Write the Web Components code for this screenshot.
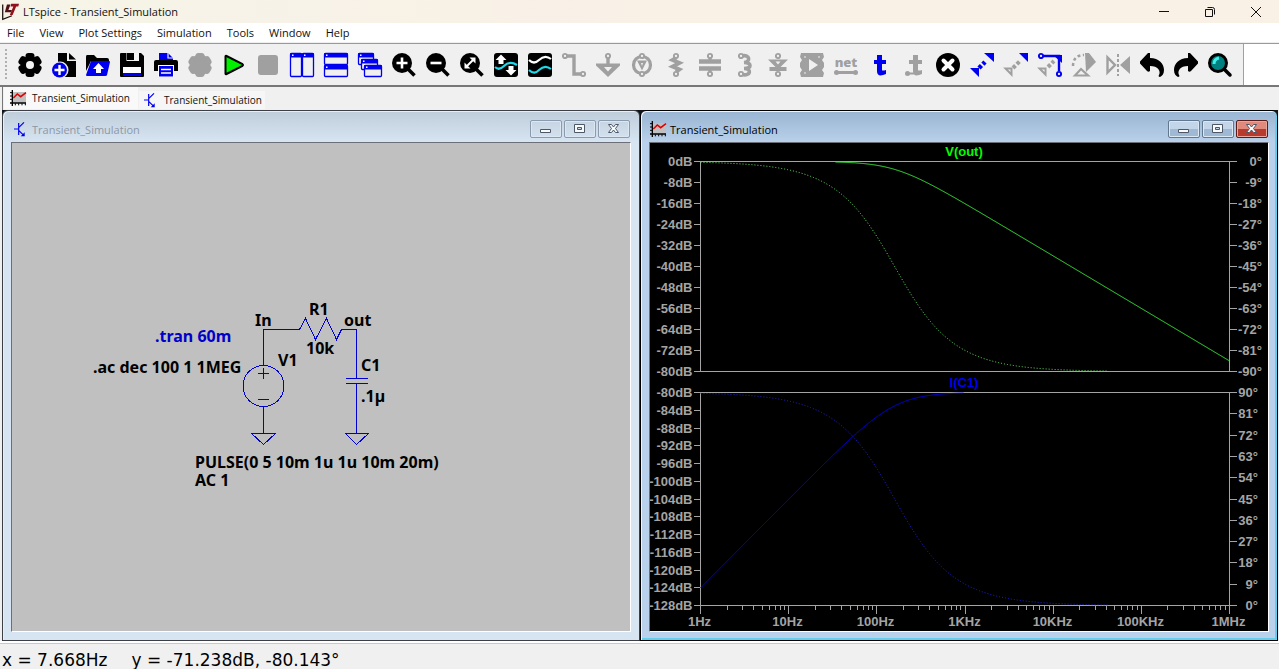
<!DOCTYPE html>
<html lang="en">
<head>
<meta charset="utf-8">
<title>LTspice - Transient_Simulation</title>
<style>
  html, body { margin: 0; height: 100%; }
  body { font: 11px/16px "Open Sans", "Noto Sans", sans-serif; color: #111; background: #f0f0f0; overflow: hidden; }
</style>
</head>
<body>
<lt-app></lt-app>

<script>
const RESET = `*{box-sizing:border-box} button{font:inherit;color:inherit;background:none;border:0;padding:0;margin:0} svg{display:block}`;

function define(name, html, Base = class extends HTMLElement {}) {
  const template = document.createElement('template');
  template.innerHTML = html;
  customElements.define(name, class extends Base {
    constructor() {
      super();
      this.attachShadow({ mode: 'open' }).append(template.content.cloneNode(true));
    }
  });
}

/* ---------- icons ---------- */
const G = '#a0a0a0', B = '#0000f0';
const cog = (c, r = 9) => `<g fill="${c}"><circle cx="12" cy="12" r="${r}"/><rect x="7.500" y="0" width="9" height="24" rx="3"/><rect x="7.500" y="0" width="9" height="24" rx="3" transform="rotate(60 12 12)"/><rect x="7.500" y="0" width="9" height="24" rx="3" transform="rotate(120 12 12)"/></g>`;
const glass = inner => `<circle cx="10" cy="10" r="10"/><path d="M15 15l7.500 7.500" stroke="#000" stroke-width="3.500"/>${inner}`;
const win = (x, y, w, h) => `<rect x="${x + .5}" y="${y + .5}" width="${w - 1}" height="${h - 1}" rx="1" fill="#f0f0f0" stroke="${B}" stroke-width="1.300"/><rect x="${x}" y="${y}" width="${w}" height="4.500" rx="1" fill="${B}"/><rect x="${x + 2}" y="${y + 1.5}" width="1.500" height="1.500" fill="#fff"/>`;
const pin = (x, y, c = G) => `<circle cx="${x}" cy="${y}" r="2.100" fill="#f0f0f0" stroke="${c}" stroke-width="1.900"/>`;
const undo = `<path d="M10 0v5c9 0 14 6 14 12 0 4-2 6-4 7-1 0-2-1-1-2 2-4-1-9-9-9v5c-1 1-2 1-3 0L0 10.500V8.500L8 0z"/>`;
const ICONS = {
  cog: cog('#000') + '<circle cx="12" cy="12" r="4" fill="#f4f4f4"/>',
  newdoc: `<path d="M6 0h9v8h9v16H6z"/><path d="M17 0l7 6.500h-7z"/><circle cx="8" cy="17" r="8.500" fill="#f0f0f0"/><circle cx="7.500" cy="17" r="7.500" fill="${B}"/><path d="M7.500 12v10M2.500 17h10" stroke="#fff" stroke-width="2.400"/>`,
  open: `<path d="M1 2h7l3 3h10q2 0 2 2v1H5L0 18V4q0-2 1-2z"/><path d="M5 8h18q1 0 1 1l-3 13q0 1-2 1H1q-1 0-1-1z" fill="${B}"/><path d="M12.500 10l5.500 6h-3v4h-5v-4H7z" fill="#fff"/>`,
  save: `<path d="M0 1q0-1 1-1h20l3 3v20q0 1-1 1H1q-1 0-1-1z"/><path d="M5 0h1.500v8H19V0h-5v6h-3V0z" fill="#f4f4f4"/><path d="M7 0h7v7H7z"/><path d="M3 14h18v6H3z" fill="#fff"/><path d="M3 20h18v3H3z" fill="${B}"/>`,
  print: `<path d="M5 0h9l5 5v3H5z" fill="${B}"/><path d="M14 0v5h5" fill="none" stroke="#f0f0f0" stroke-width="1.200"/><path d="M2 7h20q2 0 2 2v9h-4v-4H4v4H0V9q0-2 2-2z"/><path d="M4 12h16v12H4z" fill="#fff"/><path d="M5 13h14v10.500H5z" fill="${B}"/><path d="M7 16.500h10M7 20h10" stroke="#fff" stroke-width="1.400"/>`,
  cogoff: cog(G, 10.5),
  run: `<path d="M3.500 3.500q0-1 1-.5l16 8.200q1 .8 0 1.600l-16 8.200q-1 .5-1-.5z" fill="#00f000" stroke="#000" stroke-width="2"/>`,
  stop: `<rect x="2" y="2" width="20" height="20" rx="3" fill="${G}"/>`,
  tilev: win(0, 0, 12, 24) + win(12, 0, 12, 24),
  tileh: win(0, 0, 24, 12) + win(0, 12, 24, 12),
  cascade: win(0, 0, 16, 12) + win(3, 6, 17, 11) + win(6, 12, 18, 12),
  zoomin: glass('<path d="M10 4.500v11M4.500 10h11" stroke="#fff" stroke-width="2.600"/>'),
  zoomout: glass('<path d="M4.500 10h11" stroke="#fff" stroke-width="2.600"/>'),
  zoomfit: glass('<path d="M7 13l6-6" stroke="#fff" stroke-width="2"/><path d="M9.500 4.500h6v6zM4.500 9.500v6h6z" fill="#fff"/>'),
  autorange: `<rect width="24" height="24" rx="3"/><path d="M1 14c3 3 6 2 9-1s7-5 13-1" fill="none" stroke="#1fd8e8" stroke-width="2.200"/><path d="M7 1.500l5.500 5.500H9.500v4h-5V7H1.500zM17 22.500l-5.500-5.500h3v-4h5v4h3z" fill="#fff"/>`,
  traces: `<rect width="24" height="24" rx="3"/><path d="M1 7c4 4 7 3 10 0s7-5 12-1" fill="none" stroke="#fff" stroke-width="2.200"/><path d="M1 17c4 4 7 3 10 0s7-5 12-1" fill="none" stroke="#1fd8e8" stroke-width="2.200"/>`,
  wire: `<path d="M3 3h9v18h9" fill="none" stroke="${G}" stroke-width="3.400"/>${pin(3, 3)}${pin(21, 21)}`,
  gnd: `<path d="M12 4v8" stroke="${G}" stroke-width="3.400"/><path d="M0 10.500h24v2L12 24 0 12.500z" fill="${G}"/><path d="M8 14h8l-4 4.500z" fill="#f0f0f0"/>${pin(12, 3)}`,
  source: `<circle cx="12" cy="12" r="8.500" fill="none" stroke="${G}" stroke-width="3.200"/><path d="M7 7.500h10L12 17.500z" fill="${G}"/><path d="M11 10h2l-1 3z" fill="#eee"/>${pin(12, 3)}${pin(12, 21)}`,
  res: `<path d="M12 5l-3.500 2 7 3-7 3.500 7 3-3.500 2.500" fill="none" stroke="${G}" stroke-width="3.800"/>${pin(12, 3)}${pin(12, 21)}`,
  cap: `<path d="M1 8.500h22M1 15.500h22" stroke="${G}" stroke-width="4.500"/><path d="M12 4v4M12 16v4" stroke="${G}" stroke-width="3"/>${pin(12, 3)}${pin(12, 21)}`,
  ind: `<path d="M10 3c8-2 9 6 2 6.500 8 0 8 6 0 6 8 0 7 8-2 6" fill="none" stroke="${G}" stroke-width="3.600"/>${pin(9, 3)}${pin(9, 21)}`,
  diode: `<path d="M2 6.500h20l-7.500 7.500h6v4h-17v-4h6z" fill="${G}"/><path d="M9.500 8.500h5L12 11.500z" fill="#f0f0f0"/>${pin(12, 3)}${pin(12, 21)}`,
  comp: `<path d="M1 0h22l1 4-2 3 2 3v4l-2 3 2 3-1 4H1l-1-4 2-3-2-3v-4l2-3-2-3z" fill="${G}"/><path d="M9 6l9 6-9 6z" fill="#f0f0f0"/><path d="M4 4h2M4 20h2M18 4h2" stroke="#eee"/>`,
  net: `<path d="M3 19.500h18" stroke="${G}" stroke-width="3"/><circle cx="2.500" cy="19.500" r="2.500" fill="${G}"/><circle cx="21.500" cy="19.500" r="2.500" fill="${G}"/><text x="12" y="14" text-anchor="middle" font-family="Open Sans" font-weight="800" font-size="13" fill="${G}">net</text>`,
  textt: `<path d="M9 2h5v5h4v4h-4v6q0 1 4 0v4q-9 4-9-3v-7H6V7h3z" fill="${B}"/>`,
  dott: `<path d="M11 2h5v5h4v4h-4v6q0 1 4 0v4q-9 4-9-3v-7H7V7h4z" fill="${G}"/><path d="M6 20.500h6" stroke="${G}" stroke-width="2"/><circle cx="5.500" cy="20.500" r="2.500" fill="${G}"/>`,
  del: `<circle cx="12" cy="12" r="12"/><path d="M7.500 7.500l9 9M16.500 7.500l-9 9" stroke="#fff" stroke-width="4" stroke-linecap="round"/>`,
  move: `<path d="M14 0h10v9zM0 15h9v9z" fill="${B}"/><path d="M9 15l6-6" stroke="${B}" stroke-width="4.500" stroke-dasharray="3.500 2"/>`,
  copy: `<path d="M15 0h9v9z" fill="${B}"/><path d="M1.500 15.500h6v6z" fill="none" stroke="${G}" stroke-width="2"/><path d="M9 15l7-7" stroke="${G}" stroke-width="4" stroke-dasharray="3.500 2"/>`,
  drag: `<path d="M4 3h17v15" fill="none" stroke="${B}" stroke-width="2.400"/><path d="M15 2h9v8z" fill="${B}"/>${pin(3, 3, B)}${pin(21, 21, B)}<path d="M1.500 15.500h6v6z" fill="none" stroke="${G}" stroke-width="2"/><path d="M10 14l6-6" stroke="${G}" stroke-width="4" stroke-dasharray="3.500 2"/>`,
  rotate: `<path d="M13 0h4l7 9-10 10z" fill="${G}"/><path d="M1 13C1 6 5 2 12 2" fill="none" stroke="${G}" stroke-width="2.500" stroke-dasharray="3 2.500"/><path d="M3 22.500L9 16l7 6.500z" fill="none" stroke="${G}" stroke-width="2.200"/>`,
  mirror: `<path d="M12 1v22" stroke="${G}" stroke-width="2" stroke-dasharray="3 2"/><path d="M1.500 4.500v15L9 12z" fill="none" stroke="${G}" stroke-width="2.400"/><path d="M24 3v18l-10-9z" fill="${G}"/>`,
  undo,
  redo: `<g transform="matrix(-1 0 0 1 24 0)">${undo}</g>`,
  find: `<path d="M15 15l7 7" stroke="#000" stroke-width="3.500" stroke-linecap="round"/><circle cx="10" cy="10" r="8.500" fill="#008080" stroke="#000" stroke-width="3"/><path d="M6 11q0-5 5-6" stroke="#3cf0e8" stroke-width="3" fill="none"/>`,
  plot: `<path d="M4 3h20v16H4z" fill="#c0c0c0"/><path d="M3.500 0v24M0 19.500h24" stroke="#000" stroke-width="2"/><path d="M0 4h3M0 9h3M0 14h3M8 20v3M13 20v3M18 20v3M23 20v3" stroke="#000" stroke-width="1.500"/><path d="M5 12l6-6 5 4 8-6" fill="none" stroke="#e00000" stroke-width="2.300"/>`,
  schem: `<path d="M10 3v18M3 12h7M10 10l8-8M10 14l8 8" fill="none" stroke="${B}" stroke-width="1.800"/><path d="M19 23v-6l-6 6z" fill="${B}"/>`,
  logo: `<path d="M1 2L23 1 16 17 2 23z" fill="#f6efe4"/><path d="M1 2v21l13-5" fill="none" stroke="#1a1010" stroke-width="1.800"/><path d="M7 2h5l-3 8h5l-1 3H4z" fill="#501018"/><path d="M13 1h11l-1 4h-3l-5 12h-4l5-12h-4z" fill="#90101c"/>`
};
customElements.define('lt-icon', class extends HTMLElement {
  constructor() { super(); this.attachShadow({ mode: 'open' }); }
  connectedCallback() {
    this.shadowRoot.innerHTML = `<style>:host{display:block;width:24px;height:24px}svg{display:block;width:100%;height:100%;overflow:visible}</style><svg viewBox="0 0 24 24" aria-hidden="true">${ICONS[this.getAttribute('name')]}</svg>`;
  }
});

/* ---------- title bar ---------- */
define('lt-titlebar', `<style>${RESET}
  :host{display:flex;align-items:center;height:23px;padding-left:2px;background:linear-gradient(90deg,#f6f4e8,#f9f0e6 50%,#f9f0e6)}
  lt-icon{width:17px;height:17px;margin-right:4px}
  h1{font:inherit;margin:0;flex:1}
  button{width:46px;height:23px;display:grid;place-items:center}
  path{fill:none;stroke:#111}
</style>
<lt-icon name="logo"></lt-icon><h1><slot></slot></h1>
<button aria-label="Minimize"><svg width="12" height="12"><path d="M1 5.500h10"/></svg></button>
<button aria-label="Restore"><svg width="12" height="12"><path d="M1.500 3.500h7v7h-7zM3.500 1.500h5q2 0 2 2v5"/></svg></button>
<button aria-label="Close"><svg width="12" height="12"><path d="M1 1l10 10M11 1L1 11"/></svg></button>`);

/* ---------- menu ---------- */
define('lt-menubar', `<style>${RESET}
  :host{display:flex;height:20px;background:#fff;border-bottom:1px solid #eee}
  button{padding:0 8px 0 7px}
</style>
<button>File</button><button>View</button><button>Plot Settings</button><button>Simulation</button><button>Tools</button><button>Window</button><button>Help</button>`);

/* ---------- toolbar ---------- */
const TOOLS = [['cog','Settings'],['newdoc','New schematic'],['open','Open'],['save','Save'],['print','Print'],['cogoff','Configure analysis'],['run','Run'],['stop','Stop'],['tilev','Tile vertically'],['tileh','Tile horizontally'],['cascade','Cascade'],['zoomin','Zoom in'],['zoomout','Zoom out'],['zoomfit','Zoom to fit'],['autorange','Autorange'],['traces','Pick traces'],['wire','Wire'],['gnd','Ground'],['source','Voltage source'],['res','Resistor'],['cap','Capacitor'],['ind','Inductor'],['diode','Diode'],['comp','Component'],['net','Net label'],['textt','Text'],['dott','SPICE directive'],['del','Delete'],['move','Move'],['copy','Duplicate'],['drag','Drag'],['rotate','Rotate'],['mirror','Mirror'],['undo','Undo'],['redo','Redo'],['find','Find']];
define('lt-toolbar', `<style>${RESET}
  :host{display:flex;background:#fff;height:44px;border-top:1px solid #9a9a9a;border-bottom:2px solid #777}
  .band{display:flex;align-items:center;background:#f0f0f0;border-right:1px solid #a0a0a0;padding:1px 6px 0 5px}
  .grip{width:2px;height:32px;margin-right:6px;background:repeating-linear-gradient(#b0b0b0 0 2px,transparent 2px 4px)}
  button{width:34px;height:36px;display:grid;place-items:center}
</style>
<div class="band" role="toolbar"><span class="grip"></span>${TOOLS.map(([n, l]) => `<button aria-label="${l}"><lt-icon name="${n}"></lt-icon></button>`).join('')}</div>`);

/* ---------- document tabs ---------- */
define('lt-tabs', `<style>${RESET}
  :host{display:flex;align-items:flex-end;gap:1px;height:23px;margin-left:2px;padding:0 0 1px 1px;background:#f0f0f0;border-left:1px solid #777;font-size:10px}
  button{display:flex;align-items:center;gap:6px;height:18px;padding:0 3px;background:#f6f6f6}
  button.on{height:22px;padding:0 8px 0 6px;background:#f9f9f9}
  lt-icon{width:16px;height:16px}
</style>
<button class="on"><lt-icon name="plot"></lt-icon>Transient_Simulation</button>
<button><lt-icon name="schem"></lt-icon>Transient_Simulation</button>`);

/* ---------- child window ---------- */
define('lt-window', `<style>${RESET}
  :host{display:flex;flex-direction:column;min-width:0;min-height:0;border:1px solid #3c3f46;border-radius:6px 6px 0 0;padding:0 8px 8px;
    background:linear-gradient(#bfcddb,#d7e4f2 31px);color:#8c98a6;box-shadow:inset 1px 1px #e6eef6;overflow:hidden}
  :host([active]){background:linear-gradient(#99b4d1,#b9d1ea 31px);color:#000;border-color:#000;box-shadow:inset 1px 1px #eef6fc,inset -2px -2px #62cfee}
  header{display:flex;align-items:center;height:31px;gap:2px;padding:4px 1px 0 0}
  ::slotted(lt-icon){width:16px;height:16px;margin:0 2px 0 1px}
  h2{font:inherit;margin:0;padding-top:2px;flex:1}
  button{width:32px;height:18px;border:1px solid #8a9bb0;border-radius:2px;display:grid;place-items:center;box-shadow:inset 0 0 0 1px #dbe7f3}
  :host([active]) button{border-color:#61788f;background:linear-gradient(#c2d5e9 50%,#9fb9d5 50%)}
  :host([active]) .x{border-color:#5a1c18;background:linear-gradient(#df8a7c 50%,#b83a2c 50%);box-shadow:inset 0 0 0 1px #e8a79d}
  path{fill:#f8fafc;stroke:#4c5768;fill-rule:evenodd}
  .body{flex:1;min-height:0;border:1px solid #6c6f78;border-right-color:#fff;border-bottom-color:#fff;display:grid}
</style>
<header><slot name="icon"></slot><h2><slot name="title"></slot></h2>
<button aria-label="Minimize"><svg width="14" height="12"><path d="M1.500 6.500h10v3h-10z"/></svg></button>
<button aria-label="Maximize"><svg width="14" height="12"><path d="M1.500 1.500h10v8h-10zM4.500 4.500h4v2h-4z"/></svg></button>
<button class="x" aria-label="Close"><svg width="14" height="12"><path d="M1.500 1.500h3l2 2.500 2-2.500h3l-3 4 3 4h-3l-2-2.500-2 2.500h-3l3-4z"/></svg></button></header>
<div class="body"><slot></slot></div>`);

/* ---------- schematic ---------- */
define('lt-schematic', `<style>${RESET}
  :host{display:block;background:#c0c0c0;overflow:hidden}
  svg{width:100%;height:100%}
  .w{fill:none;stroke:#0000d0;shape-rendering:crispEdges}
  text{font:bold 16px "Noto Sans","Open Sans",sans-serif;fill:#000}
  .cmd{fill:#0000c8}
</style>
<svg role="img" aria-label="RC low-pass circuit">
  <path class="w" d="M251.500 222V186.500H287.500L293.500 175.500L303.500 196.500L314.500 175.500L324.500 196.500L329.500 186.500H344.500V235.500M334 235.500H356M334 240.500H356M344.500 240.500V290.500M251.500 264V290.500M246 230.500H257M251.500 225V236M246 256.500H257"/>
  <circle class="w" cx="251.500" cy="243" r="20.500"/>
  <path class="w" d="M239.500 290.500H263.500L251.500 301.500ZM333.500 290.500H356.500L344.500 301.500Z"/>
  <text x="243" y="183">In</text><text x="297" y="172">R1</text><text x="332" y="183">out</text>
  <text x="294" y="211">10k</text><text x="266" y="223">V1</text><text x="349" y="228">C1</text><text x="349" y="259">.1µ</text>
  <text class="cmd" x="143" y="199">.tran 60m</text><text x="81" y="230">.ac dec 100 1 1MEG</text>
  <text x="183" y="325">PULSE(0 5 10m 1u 1u 10m 20m)<tspan x="183" dy="18">AC 1</tspan></text>
</svg>`);

/* ---------- Bode plot ---------- */
const FC = 1 / (2 * Math.PI * 1e4 * 1e-7);
define('lt-bode', `<style>${RESET}
  :host{display:block;background:#000;overflow:hidden;min-width:0;min-height:0}
  svg{width:100%;height:100%}
  .axis{fill:none;stroke:#a4a4a4;shape-rendering:crispEdges}
  text{font:bold 13px "Liberation Sans",Arial,sans-serif;fill:#a4a4a4}
  .end{text-anchor:end}.mid{text-anchor:middle}
  .curve{fill:none;stroke-width:1}
  .dots{stroke-dasharray:1 2}
</style><svg role="img" aria-label="Bode plot of V(out) and I(C1)"></svg>`,
class extends HTMLElement {
  connectedCallback() {
    this.draw();
    new ResizeObserver(() => this.draw()).observe(this);
  }
  draw() {
    const W = this.clientWidth, H = this.clientHeight;
    if (!W || !H) return;
    const left = 50.5, right = W - 38.5, gap = 21;
    const top = 18.5, bottom = H - 25.5;
    const mid = top + Math.floor((bottom - top - gap) / 2) - 1;
    const deg = f => Math.atan(f / FC) * 180 / Math.PI;
    const panels = [
      { y0: top, y1: mid, title: 'V(out)', color: '#00ff00', line: '#38f038', dot: '#60e860', db: [0, -80, 8], ph: [0, -90], phX: -6,
        mag: f => -10 * Math.log10(1 + (f / FC) ** 2), phase: f => -deg(f) },
      { y0: mid + gap, y1: bottom, title: 'I(C1)', color: '#0000f0', line: '#0000f0', dot: '#2020e0', db: [-80, -128, 4], ph: [90, 0], phX: -10,
        mag: f => -80 - 10 * Math.log10(1 + (FC / f) ** 2), phase: f => 90 - deg(f) }
    ];
    let out = '';
    for (const p of panels) {
      const h = p.y1 - p.y0, n = (p.db[0] - p.db[1]) / p.db[2];
      let d = `M${left} ${p.y1}V${p.y0}H${right}V${p.y1}Z`;
      for (let i = 0; i <= n; i++) {
        const y = Math.floor(p.y0 + h * i / n) + .5;
        d += `M${left - 7} ${y}H${left}`;
        out += `<text class="end" x="${left - 8}" y="${y + 4.5}">${p.db[0] - p.db[2] * i}dB</text>`;
      }
      for (let i = 0; i <= 10; i++) {
        const y = Math.floor(p.y0 + h * i / 10) + .5;
        d += `M${right} ${y}h7`;
        out += `<text class="end" x="${W + p.phX}" y="${y + 4.5}">${p.ph[0] - 9 * i}°</text>`;
      }
      out += `<path class="axis" d="${d}"/><text class="mid" x="${(left + right) / 2 - 1}" y="${p.y0 - 5.5}" style="fill:${p.color}">${p.title}</text>`;
      const trace = (fn, hi, lo) => {
        const pts = [];
        for (let x = left; x <= right; x++) {
          const y = p.y0 + h * (hi - fn(10 ** (6 * (x - left) / (right - left)))) / (hi - lo);
          if (y - p.y0 > .5 && p.y1 - y > .5) pts.push(x + ' ' + y.toFixed(2));
        }
        return 'M' + pts.join('L');
      };
      out += `<path class="curve" stroke="${p.line}" d="${trace(p.mag, p.db[0], p.db[1])}"/><path class="curve dots" stroke="${p.dot}" d="${trace(p.phase, p.ph[0], p.ph[1])}"/>`;
    }
    const dec = (right - left) / 6;
    let ticks = '';
    ['1Hz', '10Hz', '100Hz', '1KHz', '10KHz', '100KHz', '1MHz'].forEach((label, k) => {
      const x = Math.round(left + k * dec - .5) + .5;
      ticks += `M${x} ${bottom}v8`;
      for (let m = 2; m < 10 && k < 6; m++) ticks += `M${Math.floor(left + (k + Math.log10(m)) * dec) + .5} ${bottom}v4`;
      out += `<text class="mid" x="${x - 1}" y="${bottom + 20.5}">${label}</text>`;
    });
    this.shadowRoot.querySelector('svg').innerHTML = out + `<path class="axis" d="${ticks}"/>`;
  }
});

/* ---------- status bar ---------- */
define('lt-status', `<style>${RESET}
  :host{display:flex;gap:24px;align-items:center;height:28px;padding:7px 2px 0;border-top:2px solid #fff;box-shadow:inset 0 1px #c8c8c8;background:#f0f0f0;color:#000;font:17px/20px "DejaVu Sans",sans-serif;white-space:pre}
</style><span>x = 7.668Hz</span><span>y = -71.238dB, -80.143°</span>`);

/* ---------- shell ---------- */
define('lt-app', `<style>${RESET}
  :host{display:flex;flex-direction:column;height:100vh}
  main{flex:1;min-height:0;display:grid;grid-template-columns:1fr 1fr;margin:0 1px 0 2px;background:#101418}
</style>
<lt-titlebar>LTspice - Transient_Simulation</lt-titlebar>
<lt-menubar></lt-menubar>
<lt-toolbar></lt-toolbar>
<lt-tabs></lt-tabs>
<main>
  <lt-window><lt-icon slot="icon" name="schem" style="width:16px;height:16px"></lt-icon><span slot="title">Transient_Simulation</span><lt-schematic></lt-schematic></lt-window>
  <lt-window active><lt-icon slot="icon" name="plot" style="width:16px;height:16px"></lt-icon><span slot="title">Transient_Simulation</span><lt-bode></lt-bode></lt-window>
</main>
<lt-status></lt-status>`);
</script>
</body>
</html>
